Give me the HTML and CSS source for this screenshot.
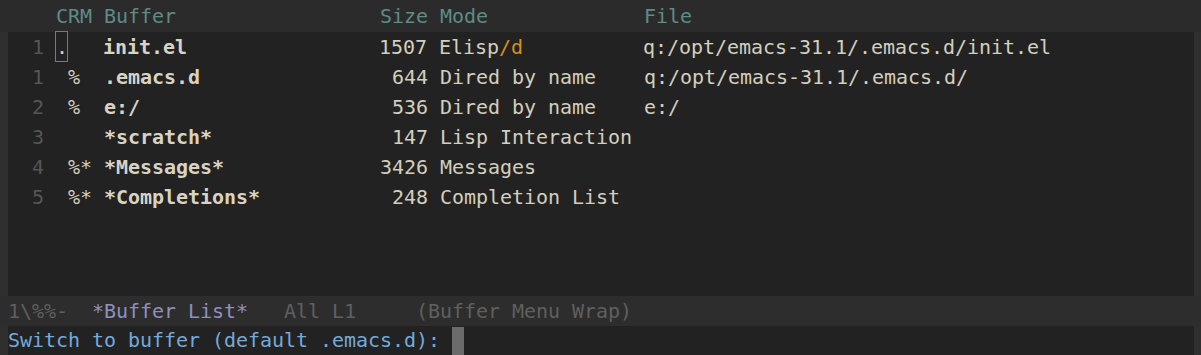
FILE: index.html
```html
<!DOCTYPE html>
<html>
<head>
<meta charset="utf-8">
<link rel="stylesheet" href="styles.css">
</head>
<body>
<div class="frame">
  <div class="header"><span class="hl">    CRM Buffer                 Size Mode             File</span></div>
  <div class="window">
    <div class="fringe"></div>
    <div class="content">
      <div class="row"><span class="ln">  1 </span><span class="cursorbox">.</span>   <b>init.el</b>                1507 Elisp<span class="or">/d</span>          q:/opt/emacs-31.1/.emacs.d/init.el</div>
      <div class="row"><span class="ln">  1 </span> %  <b>.emacs.d</b>                644 Dired by name    q:/opt/emacs-31.1/.emacs.d/</div>
      <div class="row"><span class="ln">  2 </span> %  <b>e:/</b>                     536 Dired by name    e:/</div>
      <div class="row"><span class="ln">  3 </span>    <b>*scratch*</b>               147 Lisp Interaction</div>
      <div class="row"><span class="ln">  4 </span> %* <b>*Messages*</b>             3426 Messages</div>
      <div class="row"><span class="ln">  5 </span> %* <b>*Completions*</b>           248 Completion List</div>
    </div>
    <div class="fringe right"></div>
  </div>
  <div class="modeline">1\%%-  <span class="bufname">*Buffer List*</span>   All L1     (Buffer Menu Wrap)</div>
  <div class="minibuf">
    <div class="fringe"></div>
    <div class="mbtext"><span class="prompt">Switch to buffer (default .emacs.d): </span><span class="cursor"> </span></div>
    <div class="fringe right"></div>
  </div>
</div>
</body>
</html>
```
FILE: styles.css
```css
html, body {
  margin: 0;
  padding: 0;
  background: #222222;
}
body {
  width: 1201px;
  height: 355px;
  overflow: hidden;
  font-family: "DejaVu Sans Mono", "Liberation Mono", monospace;
  font-size: 20px;
  letter-spacing: -0.041px;
  color: #d3cebe;
}
.frame {
  display: flex;
  flex-direction: column;
  width: 1201px;
  height: 355px;
}
.header {
  height: 32px;
  line-height: 32px;
  background: #2b2b2b;
  padding-left: 8px;
  white-space: pre;
  color: #5e8c87;
}
.window {
  display: flex;
  height: 264px;
  background: #222222;
}
.fringe {
  width: 8px;
  flex: none;
  background: #2f2f2f;
}
.fringe.right {
  width: 7px;
}
.content {
  flex: 1;
  display: flex;
  flex-direction: column;
}
.row {
  height: 30px;
  line-height: 31px;
  white-space: pre;
}
.row b {
  font-weight: bold;
  color: #d8d3c4;
}
.ln {
  color: #555555;
}
.or {
  color: #d58f1e;
}
.cursorbox {
  outline: 1px solid #7a7a7a;
  outline-offset: 0;
  display: inline-block;
  width: 11px;
  height: 29px;
  line-height: 31px;
  vertical-align: top;
}
.modeline {
  height: 30px;
  line-height: 30px;
  background: #2d2d2d;
  padding-left: 8px;
  white-space: pre;
  color: #5f5f5f;
}
.bufname {
  color: #9090bd;
}
.minibuf {
  display: flex;
  height: 29px;
}
.mbtext {
  flex: 1;
  white-space: pre;
  line-height: 26px;
  padding-top: 1px;
  color: #72aadd;
  display: flex;
  align-items: flex-start;
}
.cursor {
  display: inline-block;
  width: 12px;
  height: 28px;
  margin-top: 0;
  background: #6b6b6b;
}
```
